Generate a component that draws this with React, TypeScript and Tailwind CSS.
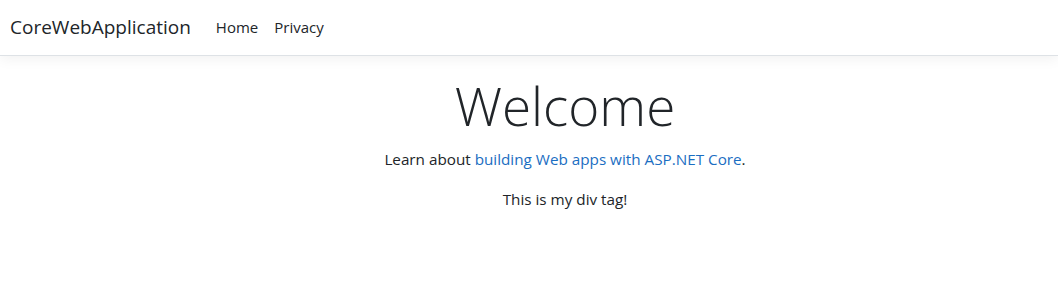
const App = () => {
  return (
    <div className="min-h-[306px] bg-white text-[#212529] font-['Open_Sans',sans-serif]">
      <header>
        <nav className="mb-4 flex h-[56px] items-center border-b border-[#dee2e6] bg-white px-[10px] shadow-[0_4px_12px_rgba(0,0,0,0.05)]">
          <a className="mr-[17px] text-[19px] text-[#212529]">CoreWebApplication</a>
          <ul className="flex items-center text-[15px] text-[#212529]">
            <li>
              <a className="px-2 py-2">Home</a>
            </li>
            <li>
              <a className="px-2 py-2">Privacy</a>
            </li>
          </ul>
        </nav>
      </header>
      <main className="pb-3 pl-[72px] text-center">
        <h1 className="mb-2 text-[53px] leading-[67px] font-light">Welcome</h1>
        <p className="mb-4 text-[15.25px] leading-6">
          Learn about{" "}
          <a className="text-[#1b6ec2]">building Web apps with ASP.NET Core</a>.
        </p>
        <p className="text-[15.25px] leading-6">This is my div tag!</p>
      </main>
    </div>
  );
};

export default App;
